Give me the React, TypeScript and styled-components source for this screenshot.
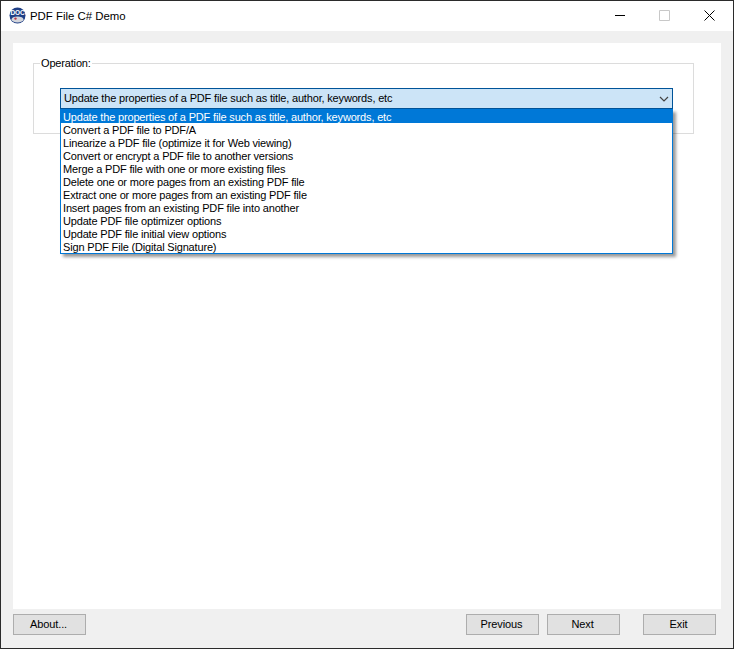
import React from "react";
import styled, { createGlobalStyle } from "styled-components";

const operations = [
  "Update the properties of a PDF file such as title, author, keywords, etc",
  "Convert a PDF file to PDF/A",
  "Linearize a PDF file (optimize it for Web viewing)",
  "Convert or encrypt a PDF file to another versions",
  "Merge a PDF file with one or more existing files",
  "Delete one or more pages from an existing PDF file",
  "Extract one or more pages from an existing PDF file",
  "Insert pages from an existing PDF file into another",
  "Update PDF file optimizer options",
  "Update PDF file initial view options",
  "Sign PDF File (Digital Signature)",
];

const GlobalStyle = createGlobalStyle`
  html, body {
    margin: 0;
    padding: 0;
    background: #f0f0f0;
  }
  * {
    box-sizing: border-box;
  }
`;

const Window = styled.div`
  display: flex;
  flex-direction: column;
  width: 734px;
  height: 649px;
  border: 1px solid #2b2b2b;
  background: #f0f0f0;
  font-family: "Liberation Sans", Arial, sans-serif;
  font-size: 11px;
  letter-spacing: -0.17px;
  color: #000;
  overflow: hidden;
`;

const TitleBar = styled.div`
  display: flex;
  align-items: center;
  height: 30px;
  padding-left: 8px;
  padding-right: 1px;
  background: #fff;
  flex-shrink: 0;
`;

const AppIcon = styled.svg`
  width: 17px;
  height: 17px;
  margin-right: 4px;
  margin-bottom: 2px;
  flex-shrink: 0;
`;

const Title = styled.span`
  font-size: 11.4px;
  letter-spacing: 0;
  flex: 1;
`;

const WindowButton = styled.div`
  display: flex;
  align-items: center;
  justify-content: center;
  width: 45px;
  height: 28px;
  align-self: flex-start;
`;

const Content = styled.div`
  flex: 1;
  display: flex;
  flex-direction: column;
  padding: 12px 12px 0;
`;

const Panel = styled.div`
  height: 566px;
  padding: 13px 27px 0 20px;
  background: #fff;
`;

const GroupBox = styled.fieldset`
  height: 78px;
  margin: 0;
  padding: 18px 20px 0 0;
  border: 1px solid #dcdcdc;
  min-width: 0;
`;

const GroupLabel = styled.legend`
  margin-left: 6px;
  padding: 0 1px;
  line-height: 14px;
`;

const Combo = styled.div`
  position: relative;
  width: 613px;
  margin-left: 26px;
`;

const ComboField = styled.div`
  display: flex;
  align-items: center;
  justify-content: space-between;
  height: 21px;
  padding: 0 3px 0 3px;
  background: #cce4f7;
  border: 1px solid #005499;
  line-height: 19px;
`;

const DropList = styled.ul`
  position: absolute;
  top: 21px;
  left: 0;
  z-index: 2;
  width: 100%;
  margin: 0;
  padding: 0;
  list-style: none;
  background: #fff;
  border: 1px solid #0078d7;
  border-top: none;
  box-shadow: 3px 3px 3px rgba(0, 0, 0, 0.4);
`;

const DropItem = styled.li<{ $selected?: boolean }>`
  height: ${({ $selected }) => ($selected ? "14px" : "13px")};
  padding-left: 2px;
  line-height: ${({ $selected }) => ($selected ? "16px" : "15px")};
  white-space: nowrap;
  overflow: hidden;
  background: ${({ $selected }) => ($selected ? "#0078d7" : "#fff")};
  color: ${({ $selected }) => ($selected ? "#fff" : "#000")};
`;

const Footer = styled.div`
  display: flex;
  align-items: flex-start;
  padding-top: 5px;
`;

const FooterButton = styled.button<{ $gap?: number }>`
  width: 73px;
  height: 21px;
  margin-left: ${({ $gap }) => $gap ?? 0}px;
  padding: 0 2px 2px 0;
  background: #e1e1e1;
  border: 1px solid #adadad;
  font-family: inherit;
  font-size: 11px;
  letter-spacing: -0.1px;
  color: #000;
`;

export default function App() {
  return (
    <>
      <GlobalStyle />
      <Window>
        <TitleBar>
          <AppIcon viewBox="0 0 17 17">
            <circle cx="8.5" cy="8.5" r="8" fill="#1f3f86" />
            <ellipse cx="8.5" cy="12.4" rx="6" ry="3" fill="#d4d6dc" />
            <circle cx="6.5" cy="11.6" r="1.2" fill="#b8364a" />
            <text
              x="8.5"
              y="8"
              textAnchor="middle"
              fontSize="6.5"
              fontWeight="700"
              fontFamily="Liberation Sans, sans-serif"
              fill="#fff"
            >
              DOC
            </text>
          </AppIcon>
          <Title>PDF File C# Demo</Title>
          <WindowButton>
            <svg width="10" height="11" viewBox="0 0 10 11">
              <path d="M0 5.5h10" stroke="#000" fill="none" />
            </svg>
          </WindowButton>
          <WindowButton>
            <svg width="11" height="11" viewBox="0 0 11 11">
              <path d="M.5.5h10v10H.5z" stroke="#c8c8c8" fill="none" />
            </svg>
          </WindowButton>
          <WindowButton>
            <svg width="11" height="11" viewBox="0 0 11 11">
              <path d="M.5.5l10 10M10.500.5l-10 10" stroke="#000" fill="none" />
            </svg>
          </WindowButton>
        </TitleBar>
        <Content>
          <Panel>
            <GroupBox>
              <GroupLabel>Operation:</GroupLabel>
              <Combo>
                <ComboField>
                  <span>{operations[0]}</span>
                  <svg width="10" height="6" viewBox="0 0 10 6">
                    <path d="M1 1l4 4 4-4" stroke="#444" fill="none" strokeWidth="1.2" />
                  </svg>
                </ComboField>
                <DropList>
                  {operations.map((op, i) => (
                    <DropItem key={op} $selected={i === 0}>
                      {op}
                    </DropItem>
                  ))}
                </DropList>
              </Combo>
            </GroupBox>
          </Panel>
          <Footer>
            <FooterButton>About...</FooterButton>
            <FooterButton $gap={380}>Previous</FooterButton>
            <FooterButton $gap={8}>Next</FooterButton>
            <FooterButton $gap={23}>Exit</FooterButton>
          </Footer>
        </Content>
      </Window>
    </>
  );
}
